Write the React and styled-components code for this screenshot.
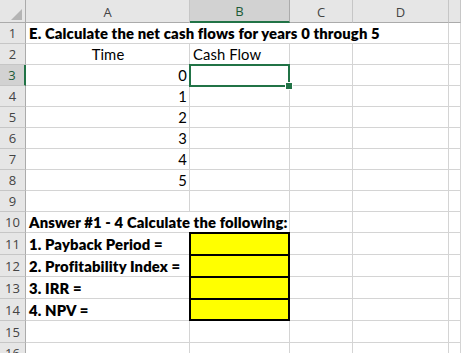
import React from 'react';
import styled, { createGlobalStyle } from 'styled-components';

const GlobalStyle = createGlobalStyle`
  *, *::before, *::after { box-sizing: border-box; }
  html, body { margin: 0; padding: 0; background: #fff; }
  body { width: 461px; height: 353px; overflow: hidden; }
`

const GRID = '#d4d4d4';
const GREEN = '#217346';

const Sheet = styled.div`
  display: grid;
  grid-template-columns: 26px 164px 100px 63px 96px 1fr;
  grid-template-rows: 23px repeat(10, 21px) repeat(5, 22px) 21px;
  width: 461px;
  font-family: Lato, "Liberation Sans", sans-serif;
  font-size: 14.8px;
  color: #000;
`

const Corner = styled.div`
  display: flex;
  align-items: flex-end;
  justify-content: flex-end;
  padding: 0 3px 2px 0;
  background: #e6e6e6;
  border-right: 1px solid #ababab;
  border-bottom: 1px solid #ababab;
`

const ColHeader = styled.div`
  display: flex;
  align-items: center;
  justify-content: center;
  padding-top: 1px;
  font-family: "Open Sans", "Noto Sans", sans-serif;
  font-size: 13px;
  color: ${props => props.$selected ? '#1d5b38' : '#444'};
  background: ${props => props.$selected ? '#d2d2d2' : '#e6e6e6'};
  border-right: 1px solid ${props => props.$selected ? '#ababab' : '#c6c6c6'};
  border-bottom: ${props => props.$selected ? `2px solid ${GREEN}` : '1px solid #ababab'};
`

const RowHeader = styled.div`
  display: flex;
  align-items: center;
  justify-content: center;
  font-family: "Open Sans", "Noto Sans", sans-serif;
  font-size: 13px;
  color: ${props => props.$selected ? '#1d5b38' : '#444'};
  background: ${props => props.$selected ? '#d2d2d2' : '#e6e6e6'};
  border-right: ${props => props.$selected ? `2px solid ${GREEN}` : '1px solid #ababab'};
  border-bottom: 1px solid #c6c6c6;
`

const Cell = styled.div`
  grid-column: span ${props => props.$span || 1};
  display: flex;
  align-items: flex-end;
  justify-content: ${props => props.$align === 'right' ? 'flex-end' : props.$align === 'center' ? 'center' : 'flex-start'};
  padding: 0 2px 0 3px;
  line-height: 19px;
  white-space: nowrap;
  font-weight: ${props => props.$bold ? 800 : 400};
  letter-spacing: ${props => props.$bold ? '0.15px' : '0.1px'};
  border-right: 1px solid ${GRID};
  border-bottom: 1px solid ${GRID};
`

const SelectedCell = styled.div`
  position: relative;
  z-index: 1;
  margin: -1px 0 -1px -1px;
  border: 2px solid ${GREEN};
`

const FillHandle = styled.span`
  position: absolute;
  right: -4px;
  bottom: -4px;
  width: 6px;
  height: 6px;
  background: ${GREEN};
  box-shadow: 0 0 0 1px #fff;
`

const AnswerCell = styled.div`
  margin: -1px 0 0 -1px;
  background: #ffff00;
  border: 2px solid #000;
  border-bottom-width: ${props => props.$last ? '2px' : '1px'};
`

const cols = ['A', 'B', 'C', 'D', 'E'];

const rows = [
  { n: 1, cells: [{ span: 4, text: 'E. Calculate the net cash flows for years 0 through 5', bold: true }] },
  { n: 2, cells: [{ text: 'Time', align: 'center' }, { text: 'Cash Flow' }] },
  { n: 3, cells: [{ text: '0', align: 'right' }, { selected: true }] },
  { n: 4, cells: [{ text: '1', align: 'right' }] },
  { n: 5, cells: [{ text: '2', align: 'right' }] },
  { n: 6, cells: [{ text: '3', align: 'right' }] },
  { n: 7, cells: [{ text: '4', align: 'right' }] },
  { n: 8, cells: [{ text: '5', align: 'right' }] },
  { n: 9, cells: [] },
  { n: 10, cells: [{ span: 2, text: 'Answer #1 - 4 Calculate the following:', bold: true }] },
  { n: 11, cells: [{ text: '1. Payback Period =', bold: true }, { answer: true }] },
  { n: 12, cells: [{ text: '2. Profitability Index =', bold: true }, { answer: true }] },
  { n: 13, cells: [{ text: '3. IRR =', bold: true }, { answer: true }] },
  { n: 14, cells: [{ text: '4. NPV =', bold: true }, { answer: true, last: true }] },
  { n: 15, cells: [] },
  { n: 16, cells: [] },
];

const fillRow = (cells) => {
  const out = [...cells];
  let used = out.reduce((sum, c) => sum + (c.span || 1), 0);
  while (used < cols.length) {
    out.push({});
    used++;
  }
  return out;
}

const renderCell = (cell, key) => {
  if (cell.selected) {
    return (
      <SelectedCell key={key}>
        <FillHandle />
      </SelectedCell>
    )
  }
  if (cell.answer) {
    return <AnswerCell key={key} $last={cell.last} />
  }
  return (
    <Cell key={key} $span={cell.span} $align={cell.align} $bold={cell.bold}>
      {cell.text}
    </Cell>
  )
}

const App = () => {
  return (
    <>
      <GlobalStyle />
      <Sheet>
        <Corner>
          <svg width="11" height="11" viewBox="0 0 11 11">
            <polygon points="11,0 11,11 0,11" fill="#b4b4b4" />
          </svg>
        </Corner>
        {cols.map(c => (
          <ColHeader key={c} $selected={c === 'B'}>{c === 'E' ? '' : c}</ColHeader>
        ))}
        {rows.map(row => (
          <React.Fragment key={row.n}>
            <RowHeader $selected={row.n === 3}>{row.n}</RowHeader>
            {fillRow(row.cells).map((cell, i) => renderCell(cell, `${row.n}-${i}`))}
          </React.Fragment>
        ))}
      </Sheet>
    </>
  )
}

export default App
